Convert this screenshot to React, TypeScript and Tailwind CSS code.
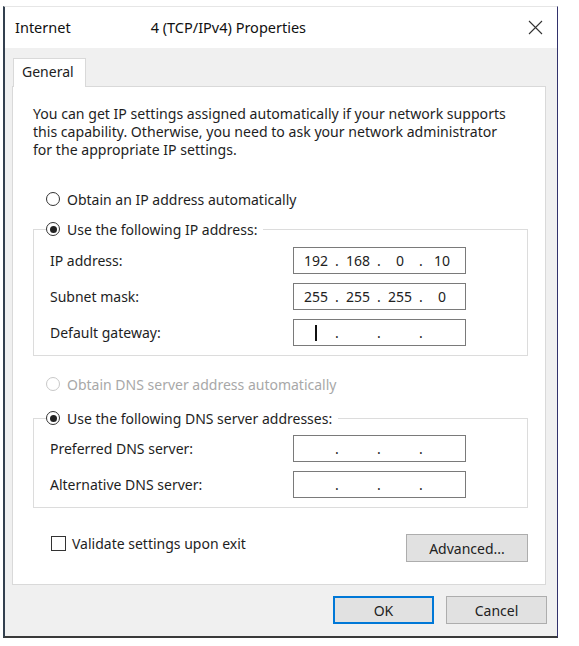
import React from "react";

const font = { fontFamily: '"Noto Sans", "Segoe UI", Arial, sans-serif' };

function Radio({ checked, disabled }: { checked?: boolean; disabled?: boolean }) {
  return (
    <span
      className={
        "flex h-[14px] w-[14px] shrink-0 items-center justify-center rounded-full border bg-white " +
        (disabled ? "border-[#c8c8c8]" : "border-[#333333]")
      }
    >
      {checked ? <span className="h-[7px] w-[7px] rounded-full bg-[#222222]" /> : null}
    </span>
  );
}

function IpField({ octets, cursor }: { octets: string[]; cursor?: boolean }) {
  return (
    <div className="flex h-[27px] w-[173px] items-center border border-[#7a7a7a] bg-white pl-[4px] text-[14px] text-[#222]">
      {octets.map((o, i) => (
        <React.Fragment key={i}>
          <span className="flex w-[36px] items-center justify-center">
            {i === 0 && cursor ? <span className="block h-[16px] w-[2px] bg-[#111]" /> : o}
          </span>
          {i < 3 ? <span className="w-[6px] text-center">.</span> : null}
        </React.Fragment>
      ))}
    </div>
  );
}

function Row({ label, octets, cursor }: { label: string; octets: string[]; cursor?: boolean }) {
  return (
    <div className="flex h-[27px] items-center">
      <span className="w-[259px] pl-[16px]">{label}</span>
      <IpField octets={octets} cursor={cursor} />
    </div>
  );
}

export default function App() {
  return (
    <div className="h-[646px] w-[579px] bg-white pl-[3px] pt-[6px] text-[14px] text-[#1e1e1e]" style={font}>
      <div className="flex h-[632px] w-[555px] flex-col border-t border-l-2 border-r border-b-2 border-t-[#e6e6e6] border-l-[#33404f] border-r-[#32326c] border-b-[#3a3a3a]">
        {/* title bar */}
        <div className="flex h-[41px] shrink-0 items-center bg-white pl-[10px] pr-[14px] text-[14.5px] text-[#111]">
          <span>Internet</span>
          <span className="ml-[80px]">4 (TCP/IPv4) Properties</span>
          <svg className="ml-auto" width="15" height="15" viewBox="0 0 15 15">
            <path d="M1 1 L14 14 M14 1 L1 14" stroke="#333" strokeWidth="1.1" fill="none" />
          </svg>
        </div>
        {/* body */}
        <div className="flex flex-1 flex-col bg-[#f0f0f0] pl-[7px] pt-[10px]">
          <div className="relative z-10 -mb-px ml-[1px] flex h-[29px] w-[73px] items-center border border-b-0 border-[#d9d9d9] bg-white pb-[3px] pl-[8px] text-[#222]">
            General
          </div>
          <div className="h-[499px] w-[534px] border border-[#d9d9d9] bg-white pl-[20px] pt-[18px]">
            <p className="leading-[18px] text-[14.1px]">
              You can get IP settings assigned automatically if your network supports
              <br />
              this capability. Otherwise, you need to ask your network administrator
              <br />
              for the appropriate IP settings.
            </p>

            <div className="ml-[13px] mt-[31px] flex h-[18px] items-center gap-[7px]">
              <Radio />
              <span>Obtain an IP address automatically</span>
            </div>

            <fieldset className="mt-[12px] w-[495px] border border-[#dcdcdc] pb-[9px]">
              <legend className="ml-[12px] flex h-[18px] items-center gap-[7px] pr-[6px]">
                <Radio checked />
                <span>Use the following IP address:</span>
              </legend>
              <div className="mt-[9px] flex flex-col gap-[9px]">
                <Row label="IP address:" octets={["192", "168", "0", "10"]} />
                <Row label="Subnet mask:" octets={["255", "255", "255", "0"]} />
                <Row label="Default gateway:" octets={["", "", "", ""]} cursor />
              </div>
            </fieldset>

            <div className="ml-[13px] mt-[19px] flex h-[18px] items-center gap-[7px] text-[#a8a8a8]">
              <Radio disabled />
              <span>Obtain DNS server address automatically</span>
            </div>

            <fieldset className="mt-[16px] w-[495px] border border-[#dcdcdc] pb-[9px]">
              <legend className="ml-[12px] flex h-[18px] items-center gap-[7px] pr-[6px]">
                <Radio checked />
                <span>Use the following DNS server addresses:</span>
              </legend>
              <div className="mt-[8px] flex flex-col gap-[9px]">
                <Row label="Preferred DNS server:" octets={["", "", "", ""]} />
                <Row label="Alternative DNS server:" octets={["", "", "", ""]} />
              </div>
            </fieldset>

            <div className="mt-[26px] flex w-[495px] items-start justify-between">
              <div className="flex h-[18px] items-center gap-[6px] pl-[18px] pt-[0px] mt-[0px]">
                <span className="h-[15px] w-[15px] border border-[#333] bg-white" />
                <span>Validate settings upon exit</span>
              </div>
              <div className="flex h-[28px] w-[122px] items-center justify-center border border-[#adadad] bg-[#e1e1e1] text-[#222]">
                Advanced...
              </div>
            </div>
          </div>
          <div className="mt-[11px] flex justify-end gap-[12px] pr-[10px]">
            <div className="flex h-[28px] w-[101px] items-center justify-center border-2 border-[#0078d7] bg-[#e1e1e1] text-[#222]">
              OK
            </div>
            <div className="flex h-[28px] w-[101px] items-center justify-center border border-[#adadad] bg-[#e1e1e1] text-[#222]">
              Cancel
            </div>
          </div>
        </div>
      </div>
    </div>
  );
}
